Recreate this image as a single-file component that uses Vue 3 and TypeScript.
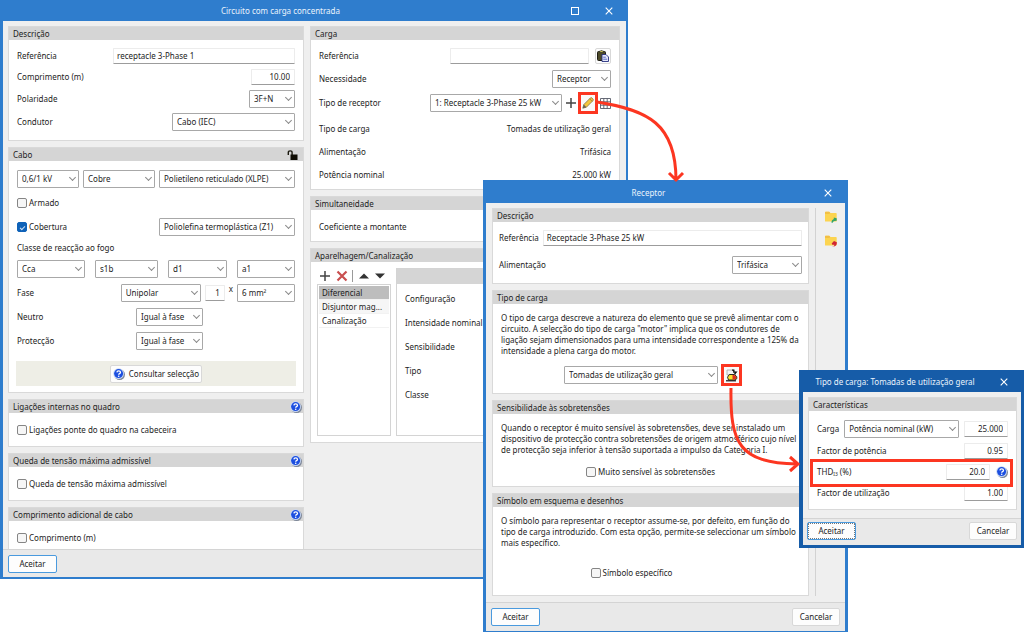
<script setup lang="ts">
import { ref } from 'vue'

interface Option {
  id: string
  value: string
  size: string
}

const cableOptions: Option[] = [
  { id: 'Tensão', value: '0,6/1 kV', size: 'w62' },
  { id: 'Material', value: 'Cobre', size: 'w72' },
  { id: 'Isolamento', value: 'Polietileno reticulado (XLPE)', size: 'grow' },
]
const fireClasses: Option[] = [
  { id: 'Classe', value: 'Cca', size: 'w68' },
  { id: 'Fumos', value: 's1b', size: 'w63' },
  { id: 'Gotas', value: 'd1', size: 'w59' },
  { id: 'Acidez', value: 'a1', size: 'w58' },
]
const matching = [
  { id: 'neutro', label: 'Neutro' },
  { id: 'proteccao', label: 'Protecção' },
]
const extras = [
  { id: 'ponte', title: 'Ligações internas no quadro', label: 'Ligações ponte do quadro na cabeceira' },
  { id: 'queda', title: 'Queda de tensão máxima admissível', label: 'Queda de tensão máxima admissível' },
  { id: 'adicional', title: 'Comprimento adicional de cabo', label: 'Comprimento (m)' },
]
const loadSummary = [
  ['Tipo de carga', 'Tomadas de utilização geral'],
  ['Alimentação', 'Trifásica'],
  ['Potência nominal', '25.000 kW'],
]
const devices = ['Diferencial', 'Disjuntor mag...', 'Canalização']
const deviceFields = ['Configuração', 'Intensidade nominal', 'Sensibilidade', 'Tipo', 'Classe']

const selectedDevice = ref(0)
const circuitName = ref('receptacle 3-Phase 1')
const length = ref('10.00')
const loadName = ref('')
const wires = ref('1')
const receptorName = ref('Receptacle 3-Phase 25 kW')
const power = ref('25.000')
const powerFactor = ref('0.95')
const thd = ref('20.0')
const usage = ref('1.00')
const covered = ref(true)
</script>

<template>
  <main class="desktop">
    <svg class="defs" aria-hidden="true">
      <symbol id="help" viewBox="0 0 12 12">
        <circle cx="6.600" cy="6.600" r="5.400" fill="#7d8799" />
        <circle cx="5.600" cy="5.600" r="5.400" fill="#c9d8f4" />
        <circle cx="5.600" cy="5.600" r="4.500" fill="#1c4fe0" />
        <path d="M3.900 4.400q.1-1.500 1.800-1.500t1.800 1.400q0 .9-1 1.400-.8.400-.8 1.100" fill="none" stroke="#fff" stroke-width="1.300" />
        <circle cx="5.700" cy="8.300" r=".8" fill="#fff" />
      </symbol>
      <symbol id="close" viewBox="0 0 8 8">
        <path d="M.7.7 7.3 7.3M7.3.7.7 7.3" stroke="#fff" stroke-width="1.100" fill="none" />
      </symbol>
      <symbol id="plus" viewBox="0 0 12 12">
        <path d="M6 1v10M1 6h10" stroke="#444" stroke-width="1.500" fill="none" />
      </symbol>
      <symbol id="folder" viewBox="0 0 12 12">
        <path d="M0 1.500q0-.7.7-.7h3.500l1.200 1.200h5.600q.7 0 .7.700v7.300q0 .6-.7.600H.7q-.7 0-.7-.6z" fill="#fcd450" />
        <path d="M0 1.500q0-.7.7-.7h3.500l1.200 1.200-1.200 1H0z" fill="#f2bf45" />
      </symbol>
    </svg>

    <section class="window circuit" aria-label="Circuito com carga concentrada">
      <header class="title">
        <h1>Circuito com carga concentrada</h1>
        <button type="button" aria-label="Maximizar">
          <svg width="8" height="8" viewBox="0 0 8 8"><rect x=".5" y=".5" width="7" height="7" fill="none" stroke="#fff" /></svg>
        </button>
        <button type="button" aria-label="Fechar"><svg width="8" height="8"><use href="#close" /></svg></button>
      </header>

      <div class="columns">
        <div class="stack">
          <section class="panel">
            <h2>Descrição</h2>
            <div class="content gap5 roomy">
              <div class="row short">
                <label for="ref" class="grow">Referência</label>
                <input id="ref" v-model="circuitName" class="w182" type="text" />
              </div>
              <div class="row short">
                <label for="comp" class="grow">Comprimento (m)</label>
                <input id="comp" v-model="length" class="num w44" type="text" />
              </div>
              <div class="row">
                <label for="pol" class="grow">Polaridade</label>
                <span class="combo w46"><select id="pol"><option>3F+N</option></select></span>
              </div>
              <div class="row">
                <label for="cond" class="grow">Condutor</label>
                <span class="combo w123"><select id="cond"><option>Cabo (IEC)</option></select></span>
              </div>
            </div>
          </section>

          <section class="panel">
            <h2>
              <span class="grow">Cabo</span>
              <svg width="11" height="10" viewBox="0 0 11 10">
                <path d="M1.300 5V2.500q0-1.600 1.900-1.600t1.900 1.600V5" fill="none" stroke="#1c1a10" stroke-width="1.400" />
                <rect x="3.500" y="4.500" width="7" height="5.500" fill="#0f0d04" />
              </svg>
            </h2>
            <div class="content cable">
              <div class="row gap4">
                <span v-for="o in cableOptions" :key="o.id" class="combo" :class="o.size">
                  <select :aria-label="o.id"><option>{{ o.value }}</option></select>
                </span>
              </div>
              <div class="row"><label class="check"><input type="checkbox" />Armado</label></div>
              <div class="row">
                <label class="check grow"><input v-model="covered" type="checkbox" />Cobertura</label>
                <span class="combo w136"><select aria-label="Cobertura"><option>Poliolefina termoplástica (Z1)</option></select></span>
              </div>
              <div class="row caption">Classe de reacção ao fogo</div>
              <div class="row spread">
                <span v-for="o in fireClasses" :key="o.id" class="combo" :class="o.size">
                  <select :aria-label="o.id"><option>{{ o.value }}</option></select>
                </span>
              </div>
              <div class="row gap4">
                <label for="fase" class="grow">Fase</label>
                <span class="combo w80"><select id="fase"><option>Unipolar</option></select></span>
                <input v-model="wires" class="num w20" type="text" aria-label="Condutores" />
                <span class="times">x</span>
                <span class="combo w58"><select aria-label="Secção"><option>6 mm²</option></select></span>
              </div>
              <div v-for="m in matching" :key="m.id" class="row same">
                <label :for="m.id" class="grow">{{ m.label }}</label>
                <span class="combo w67"><select :id="m.id"><option>Igual à fase</option></select></span>
              </div>
              <div class="band">
                <button type="button" class="push">
                  <svg width="12" height="12"><use href="#help" /></svg>Consultar selecção
                </button>
              </div>
            </div>
          </section>

          <section v-for="e in extras" :key="e.id" class="panel extra">
            <h2>
              <span class="grow">{{ e.title }}</span>
              <button type="button" class="bare" :aria-label="'Ajuda: ' + e.title"><svg width="12" height="12"><use href="#help" /></svg></button>
            </h2>
            <div class="content">
              <div class="row"><label class="check"><input type="checkbox" />{{ e.label }}</label></div>
            </div>
          </section>
        </div>

        <div class="stack">
          <section class="panel">
            <h2>Carga</h2>
            <div class="content">
              <div class="row short gap6">
                <label for="cref" class="grow">Referência</label>
                <input id="cref" v-model="loadName" class="w139" type="text" />
                <button type="button" class="push square" aria-label="Colar">
                  <svg width="12" height="12" viewBox="0 0 12 12">
                    <rect x=".5" y="1.500" width="8" height="9" rx="1" fill="#4d4a28" stroke="#1d1c14" />
                    <path d="M2.500 2.500V1h1.200l.8-1 .8 1h1.200v1.500z" fill="#c9c25a" stroke="#222" stroke-width=".6" />
                    <path d="M5 4.500h4l2.500 2.500v4.500H5z" fill="#e6e9fb" stroke="#27307f" stroke-width=".9" />
                    <path d="M6.200 7.200h2.600M6.200 9.200h4" stroke="#3a49b8" stroke-width=".8" />
                  </svg>
                </button>
              </div>
              <div class="row">
                <label for="nec" class="grow">Necessidade</label>
                <span class="combo w59"><select id="nec"><option>Receptor</option></select></span>
              </div>
              <div class="row tools">
                <label for="tipo" class="grow">Tipo de receptor</label>
                <span class="combo w132"><select id="tipo"><option>1: Receptacle 3-Phase 25 kW</option></select></span>
                <button type="button" class="bare pad" aria-label="Adicionar"><svg width="12" height="12"><use href="#plus" /></svg></button>
                <button type="button" class="marked" aria-label="Editar">
                  <svg width="12" height="12" viewBox="0 0 12 12">
                    <path d="M.8 11.200l1-3.600L8.300 1q.9-.8 1.800.1l.8.8q.8.900 0 1.800L4.400 10.200z" fill="#f3c63c" stroke="#857446" stroke-width=".8" />
                    <path d="M.8 11.200l1-3.600 2.600 2.600z" fill="#66635c" />
                    <path d="M7.600 1.800l2.600 2.600" stroke="#8a7740" stroke-width=".8" />
                  </svg>
                </button>
                <button type="button" class="bare table" aria-label="Lista">
                  <svg width="11" height="11" viewBox="0 0 11 11">
                    <path d="M.5.5h10v10H.5zM.5 3.800h10M.5 7.200h10M3.800.5v10M7.200.5v10" fill="#fff" stroke="#565a68" stroke-width=".9" />
                  </svg>
                </button>
              </div>
              <dl class="summary">
                <div v-for="[k, v] in loadSummary" :key="k" class="row">
                  <dt class="grow">{{ k }}</dt>
                  <dd>{{ v }}</dd>
                </div>
              </dl>
            </div>
          </section>

          <section class="panel">
            <h2>Simultaneidade</h2>
            <div class="content tight"><div class="row">Coeficiente a montante</div></div>
          </section>

          <section class="panel">
            <h2>Aparelhagem/Canalização</h2>
            <div class="split">
              <div class="side">
                <div class="bar">
                  <button type="button" class="bare" aria-label="Adicionar"><svg width="12" height="12"><use href="#plus" /></svg></button>
                  <button type="button" class="bare" aria-label="Eliminar">
                    <svg width="12" height="12" viewBox="0 0 12 12"><path d="M1.500 1.500l9 9M10.500 1.500l-9 9" stroke="#c94f4f" stroke-width="2.200" fill="none" /></svg>
                  </button>
                  <i></i>
                  <button type="button" class="bare" aria-label="Subir"><svg width="12" height="12" viewBox="0 0 12 12"><path d="M1 8.500h10L6 3.500z" fill="#333" /></svg></button>
                  <button type="button" class="bare" aria-label="Descer"><svg width="12" height="12" viewBox="0 0 12 12"><path d="M1 3.500h10L6 8.500z" fill="#333" /></svg></button>
                </div>
                <ul class="list">
                  <li v-for="(d, i) in devices" :key="d">
                    <button type="button" :class="{ on: i === selectedDevice }" @click="selectedDevice = i">{{ d }}</button>
                  </li>
                </ul>
              </div>
              <div class="detail">
                <div class="strip"></div>
                <div v-for="f in deviceFields" :key="f" class="row">{{ f }}</div>
              </div>
            </div>
          </section>
        </div>
      </div>

      <footer>
        <button type="button" class="push primary">Aceitar</button>
      </footer>
    </section>

    <section class="window receptor" aria-label="Receptor">
      <header class="title">
        <h1>Receptor</h1>
        <button type="button" aria-label="Fechar"><svg width="8" height="8"><use href="#close" /></svg></button>
      </header>

      <div class="main">
        <div class="stack grow">
          <section class="panel">
            <h2>Descrição</h2>
            <div class="content gap10 wide">
              <div class="row short gap4">
                <label for="rref">Referência</label>
                <input id="rref" v-model="receptorName" class="grow" type="text" />
              </div>
              <div class="row">
                <label for="rali" class="grow">Alimentação</label>
                <span class="combo w70"><select id="rali"><option>Trifásica</option></select></span>
              </div>
            </div>
          </section>

          <section class="panel">
            <h2>Tipo de carga</h2>
            <div class="content gap10 roomy">
              <p>
                O tipo de carga descreve a natureza do elemento que se prevê alimentar com o<br />
                circuito. A selecção do tipo de carga "motor" implica que os condutores de<br />
                ligação sejam dimensionados para uma intensidade correspondente a 125% da<br />
                intensidade a plena carga do motor.
              </p>
              <div class="row kind">
                <span class="combo w154"><select aria-label="Tipo de carga"><option>Tomadas de utilização geral</option></select></span>
                <button type="button" class="marked large" aria-label="Editar tipo de carga">
                  <svg width="13" height="13" viewBox="0 0 13 13">
                    <path d="M2 1h6.500l2 2v3H2z" fill="#f4f4f4" stroke="#a3a3a3" stroke-width=".8" />
                    <path d="M7 1.200h1.800v2h2.400L9.500 5.200" fill="none" stroke="#111" stroke-width="1.300" />
                    <path d="M2.500 8.200l1.800-2.700h5.200l2.300 2.200v2l-1.800 1.300H3.500z" fill="#f6e22e" stroke="#161616" stroke-width=".9" />
                    <path d="M7.500 6h1.800l2 1.800v1.700l-1.500 1h-2.300z" fill="#e0301e" />
                    <path d="M1 11.800h10" stroke="#161616" stroke-width="1.200" />
                  </svg>
                </button>
              </div>
            </div>
          </section>

          <section class="panel">
            <h2>Sensibilidade às sobretensões</h2>
            <div class="content tight gap8">
              <p>
                Quando o receptor é muito sensível às sobretensões, deve ser instalado um<br />
                dispositivo de protecção contra sobretensões de origem atmosférico cujo nível<br />
                de protecção seja inferior à tensão suportada a impulso da Categoria I.
              </p>
              <div class="row center"><label class="check"><input type="checkbox" />Muito sensível às sobretensões</label></div>
            </div>
          </section>

          <section class="panel">
            <h2>Símbolo em esquema e desenhos</h2>
            <div class="content symbol">
              <p>
                O símbolo para representar o receptor assume-se, por defeito, em função do<br />
                tipo de carga introduzido. Com esta opção, permite-se seleccionar um símbolo<br />
                mais específico.
              </p>
              <div class="row center"><label class="check"><input type="checkbox" />Símbolo específico</label></div>
            </div>
          </section>
        </div>

        <aside>
          <button type="button" class="bare" aria-label="Importar">
            <svg width="12" height="12" viewBox="0 0 12 12">
              <use href="#folder" />
              <path d="M6.300 11.500q.2-3 2.500-3.500V6.500l2.900.7v2.500L9.500 10q-1.500 0-1.700 1.700z" fill="#35a567" />
            </svg>
          </button>
          <button type="button" class="bare" aria-label="Exportar">
            <svg width="12" height="12" viewBox="0 0 12 12">
              <use href="#folder" />
              <path d="M7 11.900q2.500-.2 2.500-2.200H7.300L6.700 8.500 9 6l2.800 1.200q.5 4.300-4.800 4.700z" fill="#d02434" />
            </svg>
          </button>
        </aside>
      </div>

      <footer>
        <button type="button" class="push primary">Aceitar</button>
        <button type="button" class="push">Cancelar</button>
      </footer>
    </section>

    <section class="window kindbox" aria-label="Tipo de carga">
      <header class="title">
        <h1>Tipo de carga: Tomadas de utilização geral</h1>
        <button type="button" aria-label="Fechar"><svg width="8" height="8"><use href="#close" /></svg></button>
      </header>

      <div class="main">
        <section class="panel grow">
          <h2>Características</h2>
          <div class="content gap5">
            <div class="row gap5">
              <label for="carga">Carga</label>
              <span class="combo grow"><select id="carga"><option>Potência nominal (kW)</option></select></span>
              <input v-model="power" class="num w44" type="text" aria-label="Potência" />
            </div>
            <div class="row short">
              <label for="fp" class="grow">Factor de potência</label>
              <input id="fp" v-model="powerFactor" class="num w44" type="text" />
            </div>
            <div class="row short gap6 boxed">
              <label for="thd" class="grow">THD<sub>I3</sub> (%)</label>
              <input id="thd" v-model="thd" class="num w44" type="text" />
              <button type="button" class="bare" aria-label="Ajuda"><svg width="12" height="12"><use href="#help" /></svg></button>
            </div>
            <div class="row short">
              <label for="fu" class="grow">Factor de utilização</label>
              <input id="fu" v-model="usage" class="num w44" type="text" />
            </div>
          </div>
        </section>
      </div>

      <footer>
        <button type="button" class="push primary focus">Aceitar</button>
        <button type="button" class="push">Cancelar</button>
      </footer>
    </section>

    <svg class="arrows" viewBox="0 0 1024 632" preserveAspectRatio="none" aria-hidden="true">
      <path d="M597 102C648 110 676 124 676 180M669 173l7 7 7-7" />
      <path d="M731 388C730 443 739 463 797 464M790 457l8 7-8 7" />
    </svg>
  </main>
</template>

<style>
body {
  margin: 0;
  background: #fff;
}
</style>

<style scoped>
.desktop {
  display: grid;
  grid-template-columns: 483fr 145fr 171fr 49fr 176fr;
  grid-template-rows: auto;
  align-items: start;
  font: 8px/12px "Noto Sans", "Open Sans", sans-serif;
  color: #1c1c1c;
}
*, *::before, *::after { box-sizing: border-box; }
h1, h2, p, ul, dl, dd { margin: 0; padding: 0; }
button, input, select { font: inherit; color: inherit; margin: 0; }
button { padding: 0; cursor: pointer; }
svg { display: block; flex: none; }
.defs { position: absolute; width: 0; height: 0; }

.window {
  grid-row: 1;
  min-width: 0;
  background: #efefef;
  border: solid #2f7dcd;
  border-width: 0 3px 2px;
}
.circuit { grid-column: 1 / 3; border-right-width: 2px; }
.receptor { grid-column: 2 / 5; margin-top: 180px; z-index: 1; }
.kindbox { grid-column: 4 / 6; margin-top: 370px; z-index: 2; border-color: #165ca8; border-width: 0 3px 3px 4px; }
.title { display: flex; align-items: center; height: 21px; background: #2f7dcd; color: #eaf3fc; }
.receptor .title { height: 23px; padding-top: 2px; }
.kindbox .title { height: 22px; padding-top: 2px; background: #165ca8; }
.title h1 { flex: 1; font: inherit; text-align: center; white-space: nowrap; }
.title button { display: grid; place-items: center; width: 34px; height: 20px; border: 0; background: none; }

.columns { display: grid; grid-template-columns: 296fr 310fr; gap: 6px; padding: 5px 6px 0 5px; }
.stack { display: flex; flex-direction: column; gap: 6px; min-width: 0; }
.main { display: flex; gap: 6px; padding: 5px 0 6px 6px; }
.kindbox .main { padding: 5px 4px 8px 5px; }

.panel { min-width: 0; background: #fff; border: 1px solid #d9d9d9; }
.panel h2 {
  display: flex;
  align-items: center;
  height: 13px;
  padding: 0 1px 0 4px;
  background: #d5d5d5;
  font: inherit;
}
.panel h2 > svg { margin-right: 4px; }
.content { display: flex; flex-direction: column; gap: 6px; padding: 8px; }
.content.gap5 { gap: 5px; }
.content.gap8 { gap: 8px; }
.content.gap10 { gap: 10px; }
.content.tight { padding-bottom: 5px; }
.content.roomy { padding-bottom: 9px; }
.content.wide { padding: 8px 6px 9px; }
.content.cable { padding-top: 9px; }
.content.symbol { gap: 16px; padding-bottom: 13px; }
.symbol .row { padding-right: 38px; }
.kindbox .content { padding-top: 9px; }
.content p { line-height: 11px; white-space: nowrap; }

.row { display: flex; align-items: center; height: 18px; white-space: nowrap; }
.row.short { height: 16px; }
.row.caption { height: 12px; }
.row.gap4 { gap: 4px; }
.row.gap5 { gap: 5px; }
.row.gap6 { gap: 6px; }
.row.spread { justify-content: space-between; }
.row.center { justify-content: center; }
.row.same { padding-right: 92px; }
.row.kind { gap: 3px; padding-left: 63px; }
.grow { flex: 1; min-width: 0; }

input[type="text"] {
  height: 16px;
  padding: 0 4px 2px 3px;
  border: 1px solid #ececec;
  border-bottom-color: #9c9c9c;
  border-radius: 1px;
  background: #fff;
  outline: 0;
}
input.num { text-align: right; }
.combo { position: relative; display: block; }
.combo select {
  display: block;
  width: 100%;
  height: 18px;
  padding: 0 12px 0 4px;
  border: 1px solid #a8a8a8;
  border-radius: 1px;
  background: #fff;
  appearance: none;
  outline: 0;
}
.combo::after {
  content: "";
  position: absolute;
  right: 4px;
  top: 5px;
  width: 5px;
  height: 5px;
  border: solid #8a8a8a;
  border-width: 0 1px 1px 0;
  transform: rotate(45deg);
  pointer-events: none;
}
.check { display: flex; align-items: center; gap: 2px; }
.check input {
  width: 10px;
  height: 10px;
  margin: 0;
  border: 1px solid #858585;
  border-radius: 2px;
  background: #f6f6f6;
  appearance: none;
  display: grid;
  place-items: center;
}
.check input:checked { background: #0f62b8; border-color: #0f62b8; }
.check input:checked::after {
  content: "";
  width: 5px;
  height: 3px;
  border: solid #cfe2f6;
  border-width: 0 0 1px 1px;
  transform: rotate(-45deg);
}
.times { align-self: flex-start; line-height: 10px; }

.push {
  display: flex;
  align-items: center;
  justify-content: center;
  gap: 4px;
  height: 18px;
  min-width: 48px;
  padding: 0 2px;
  border: 1px solid #d8d8d8;
  border-radius: 2px;
  background: #fdfdfd;
}
.push.primary { min-width: 49px; border-color: #4a9ade; }
.push.focus { outline: 1px dotted #777; outline-offset: -2px; }
.push.square { width: 16px; min-width: 16px; height: 16px; padding: 0; }
.bare { display: block; border: 0; background: none; }
.marked {
  display: grid;
  place-items: center;
  flex: none;
  width: 20px;
  height: 22px;
  border: 3px solid #fc3621;
  background: #fafafa;
}
.marked.large { width: 21px; }
.tools .pad { margin: 0 1px 0 3px; }
.tools .table { margin-left: 2px; }

.band { display: grid; place-items: center; height: 25px; margin: 5px -1px -2px; background: #eeeee6; }
.extra .content { padding-bottom: 7px; }
.extra:last-child { border-bottom: 0; }
.extra:last-child .content { padding-bottom: 2px; }

.summary { display: flex; flex-direction: column; gap: 5px; padding-top: 2px; margin-bottom: -3px; }
.split { display: flex; gap: 5px; padding: 6px 5px 6px 6px; }
.side { width: 74px; flex: none; }
.bar { display: flex; align-items: center; justify-content: space-between; height: 16px; padding: 1px 5px 1px 2px; }
.bar i { width: 1px; height: 12px; background: #9a9a9a; }
.list { height: 152px; border: 1px solid #d4d4d4; list-style: none; padding: 1px; }
.list button {
  display: block;
  width: 100%;
  height: 14px;
  padding: 0 3px;
  border: 0;
  border-bottom: 1px solid #f2f2f2;
  background: #fff;
  text-align: left;
}
.list li:nth-child(even) button { background: #f6f6f6; }
.list button.on { background: #bdbdbd; }
.detail { flex: 1; display: flex; flex-direction: column; gap: 6px; border: 1px solid #d4d4d4; }
.detail .row { padding: 0 8px; }
.strip { height: 15px; background: #d5d5d5; }

aside { display: flex; flex-direction: column; align-items: flex-start; gap: 12px; width: 30px; padding: 3px 9px; border-left: 1px solid #d2d2d2; }
footer { display: flex; justify-content: space-between; padding: 5px; border-top: 1px solid #d4d4d4; background: #e9e9e9; }
.circuit footer { padding-bottom: 4px; }
.kindbox footer { padding: 3px 4px 5px; }
.boxed { position: relative; }
.boxed::after { content: ""; position: absolute; inset: -5px -5px -7px -7px; border: 3px solid #fc3621; pointer-events: none; }
sub { font-size: 5px; line-height: 0; vertical-align: -1px; }

.arrows { grid-area: 1 / 1 / 2 / -1; z-index: 3; width: 100%; height: 632px; pointer-events: none; }
.arrows path { fill: none; stroke: #fc3621; stroke-width: 3px; vector-effect: non-scaling-stroke; }

.w20 { width: 20px; }
.w44 { width: 44px; }
.w46 { width: 46px; }
.w58 { width: 58px; }
.w59 { width: 59px; }
.w62 { width: 62px; }
.w63 { width: 63px; }
.w67 { width: 67px; }
.w68 { width: 68px; }
.w70 { width: 70px; }
.w72 { width: 72px; }
.w80 { width: 80px; }
.w123 { width: 123px; }
.w132 { width: 132px; }
.w136 { width: 136px; }
.w139 { width: 139px; }
.w154 { width: 154px; }
.w182 { width: 182px; }
</style>
